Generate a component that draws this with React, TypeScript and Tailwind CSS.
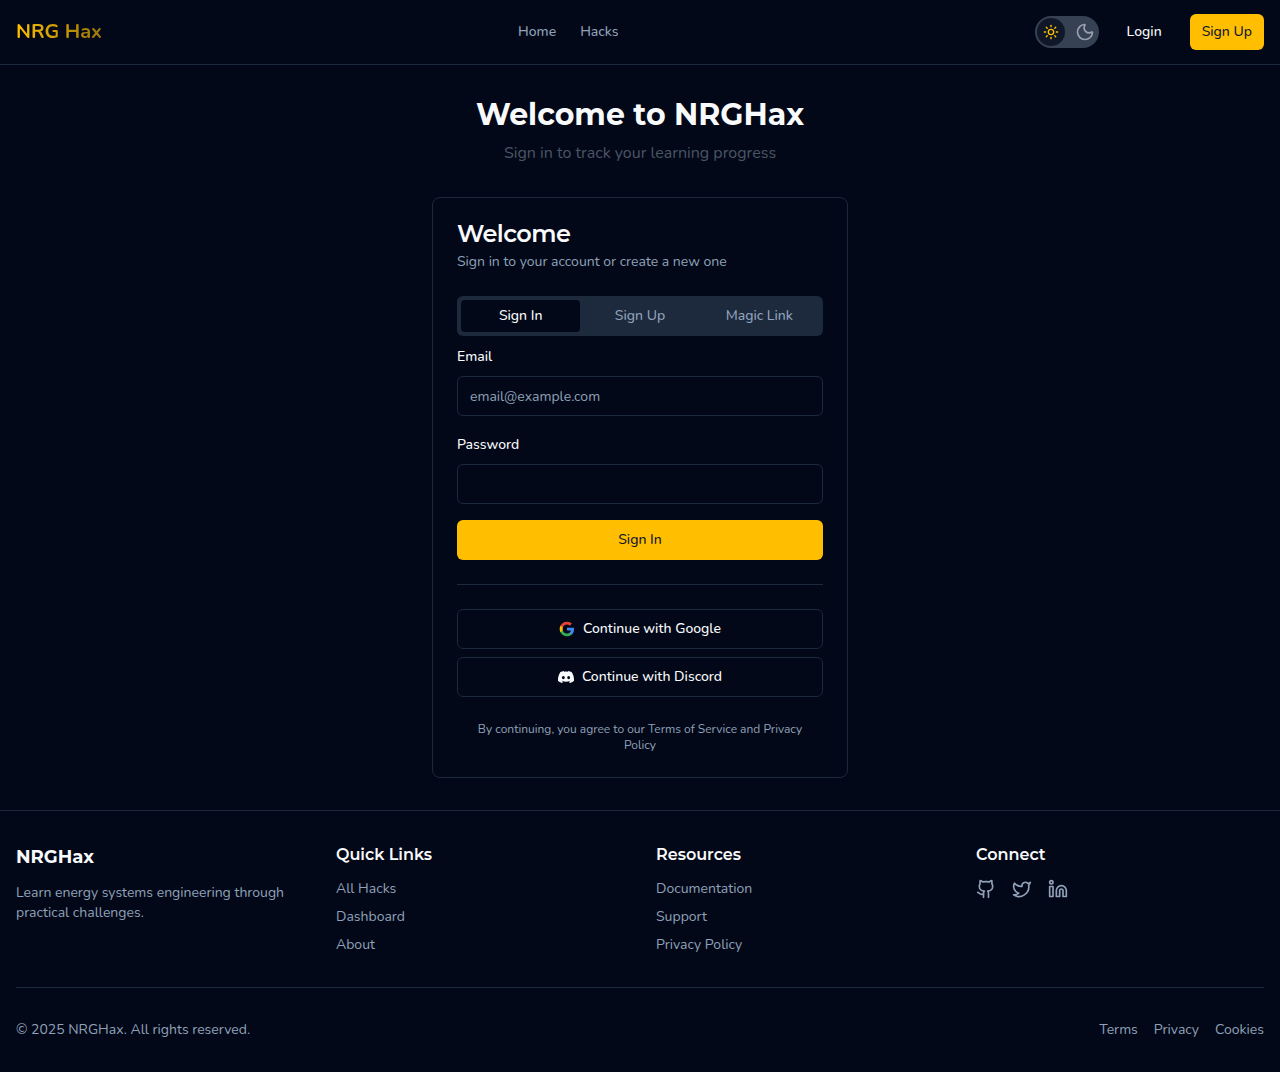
import React from 'react';
import { Github, Linkedin, Moon, Sun, Twitter } from 'lucide-react';
import { SiDiscord } from 'react-icons/si';

const heading = "font-['Montserrat','Inter',sans-serif]";

function GoogleMark() {
  return (
    <svg className="size-4" viewBox="0 0 24 24" aria-hidden="true">
      <path fill="#4285F4" d="M22.56 12.25c0-.78-.07-1.53-.2-2.25H12v4.26h5.92c-.26 1.37-1.04 2.53-2.21 3.31v2.77h3.57c2.08-1.92 3.28-4.74 3.28-8.09z" />
      <path fill="#34A853" d="M12 23c2.97 0 5.46-.98 7.28-2.66l-3.57-2.77c-.98.66-2.23 1.06-3.71 1.06-2.86 0-5.29-1.93-6.16-4.53H2.18v2.84C3.99 20.53 7.7 23 12 23z" />
      <path fill="#FBBC05" d="M5.84 14.09c-.22-.66-.35-1.36-.35-2.09s.13-1.43.35-2.09V7.07H2.18C1.43 8.55 1 10.22 1 12s.43 3.45 1.18 4.93l2.85-2.22.81-.62z" />
      <path fill="#EA4335" d="M12 5.38c1.62 0 3.06.56 4.21 1.64l3.15-3.15C17.45 2.09 14.97 1 12 1 7.7 1 3.99 3.47 2.18 7.07l3.66 2.84c.87-2.6 3.3-4.53 6.16-4.53z" />
    </svg>
  );
}

function Header() {
  return (
    <header className="border-b border-slate-800">
      <div className="flex h-16 items-center justify-between px-4">
        <a href="#" className="bg-linear-to-r from-[#ffbf00] to-[#ffbf00]/60 bg-clip-text text-xl font-bold text-transparent">
          NRG Hax
        </a>
        <nav className="flex gap-6 text-sm font-medium text-slate-400">
          <a href="#">Home</a>
          <a href="#">Hacks</a>
        </nav>
        <div className="flex items-center gap-4">
          <button type="button" aria-label="Toggle theme" className="flex h-8 w-16 items-center justify-between rounded-full border-2 border-gray-700 bg-gray-700 pr-0.5">
            <span className="flex size-7 items-center justify-center rounded-full bg-gray-900">
              <Sun className="size-4 text-[#ffbf00]" />
            </span>
            <Moon className="size-5 text-gray-400" />
          </button>
          <button type="button" className="h-9 rounded-md px-3 text-sm font-medium">Login</button>
          <button type="button" className="h-9 rounded-md bg-[#ffbf00] px-3 text-sm font-medium text-slate-900">Sign Up</button>
        </div>
      </div>
    </header>
  );
}

const labelClass = 'text-sm leading-none font-medium';
const inputClass = 'mt-2 block h-10 w-full rounded-md border border-slate-800 bg-transparent px-3 text-sm placeholder:text-slate-400';
const providerClass = 'flex h-10 w-full items-center justify-center gap-2 rounded-md border border-slate-800 text-sm font-medium';

function SignInCard() {
  return (
    <section className="rounded-lg border border-slate-800 p-6">
      <h2 className={`${heading} text-2xl leading-none font-semibold tracking-tight`}>Welcome</h2>
      <p className="mt-1.5 text-sm text-slate-400">Sign in to your account or create a new one</p>
      <div role="tablist" className="mt-6 grid h-10 grid-cols-3 rounded-md bg-slate-800 p-1 text-sm font-medium text-slate-400">
        <button type="button" role="tab" aria-selected="true" className="rounded-sm bg-[#020817] text-slate-50">Sign In</button>
        <button type="button" role="tab" aria-selected="false">Sign Up</button>
        <button type="button" role="tab" aria-selected="false">Magic Link</button>
      </div>
      <form className="mt-2 flex flex-col gap-4" onSubmit={(e) => e.preventDefault()}>
        <div>
          <label htmlFor="email" className={labelClass}>Email</label>
          <input id="email" type="email" placeholder="email@example.com" className={inputClass} />
        </div>
        <div>
          <label htmlFor="password" className={labelClass}>Password</label>
          <input id="password" type="password" className={inputClass} />
        </div>
        <button type="submit" className="h-10 rounded-md bg-[#ffbf00] text-sm font-medium text-slate-900">Sign In</button>
      </form>
      <hr className="my-6 border-slate-800" />
      <div className="flex flex-col gap-2">
        <button type="button" className={providerClass}>
          <GoogleMark />
          Continue with Google
        </button>
        <button type="button" className={providerClass}>
          <SiDiscord className="size-4" />
          Continue with Discord
        </button>
      </div>
      <p className="mt-6 px-3 text-center text-xs text-slate-400">
        By continuing, you agree to our Terms of Service and Privacy Policy
      </p>
    </section>
  );
}

function LinkColumn({ title, links }: { title: string; links: string[] }) {
  return (
    <div>
      <h4 className={`${heading} mb-3 text-base font-semibold`}>{title}</h4>
      <ul className="flex flex-col gap-2 text-sm text-slate-400">
        {links.map((link) => (
          <li key={link}><a href="#">{link}</a></li>
        ))}
      </ul>
    </div>
  );
}

function Footer() {
  return (
    <footer className="border-t border-slate-800 px-4 py-8">
      <div className="grid grid-cols-4 gap-8">
        <div>
          <h3 className={`${heading} mb-3 text-lg font-bold`}>NRGHax</h3>
          <p className="text-sm text-slate-400">Learn energy systems engineering through practical challenges.</p>
        </div>
        <LinkColumn title="Quick Links" links={['All Hacks', 'Dashboard', 'About']} />
        <LinkColumn title="Resources" links={['Documentation', 'Support', 'Privacy Policy']} />
        <div>
          <h4 className={`${heading} mb-3 text-base font-semibold`}>Connect</h4>
          <div className="flex gap-4 text-slate-400">
            <a href="#" aria-label="GitHub"><Github className="size-5" /></a>
            <a href="#" aria-label="Twitter"><Twitter className="size-5" /></a>
            <a href="#" aria-label="LinkedIn"><Linkedin className="size-5" /></a>
          </div>
        </div>
      </div>
      <div className="mt-8 flex justify-between border-t border-slate-800 pt-8 text-sm text-slate-400">
        <p>© 2025 NRGHax. All rights reserved.</p>
        <nav className="flex gap-4">
          <a href="#">Terms</a>
          <a href="#">Privacy</a>
          <a href="#">Cookies</a>
        </nav>
      </div>
    </footer>
  );
}

export default function App() {
  return (
    <div className="min-h-screen bg-[#020817] font-['Nunito','Open_Sans',sans-serif] text-slate-50">
      <Header />
      <main className="mx-auto max-w-md px-4 py-8">
        <div className="mb-8 text-center">
          <h1 className={`${heading} mb-2 text-3xl font-bold`}>Welcome to NRGHax</h1>
          <p className="text-base text-gray-600">Sign in to track your learning progress</p>
        </div>
        <SignInCard />
      </main>
      <Footer />
    </div>
  );
}
